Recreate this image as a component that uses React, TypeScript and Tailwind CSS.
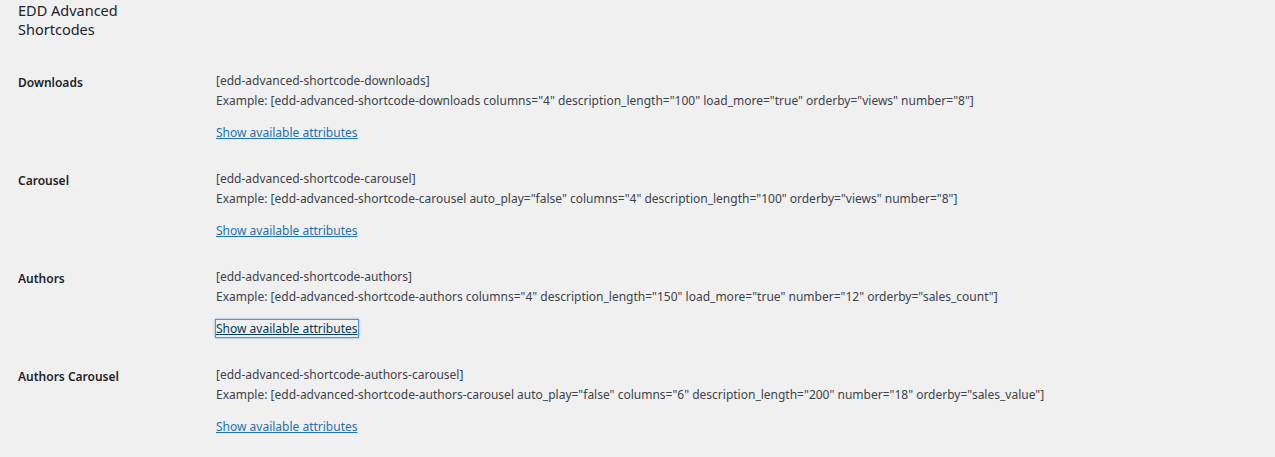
import React from "react";

type Shortcode = {
  label: string;
  tag: string;
  example: string;
  focused?: boolean;
};

const shortcodes: Shortcode[] = [
  {
    label: "Downloads",
    tag: "[edd-advanced-shortcode-downloads]",
    example:
      'Example: [edd-advanced-shortcode-downloads columns="4" description_length="100" load_more="true" orderby="views" number="8"]',
  },
  {
    label: "Carousel",
    tag: "[edd-advanced-shortcode-carousel]",
    example:
      'Example: [edd-advanced-shortcode-carousel auto_play="false" columns="4" description_length="100" orderby="views" number="8"]',
  },
  {
    label: "Authors",
    tag: "[edd-advanced-shortcode-authors]",
    example:
      'Example: [edd-advanced-shortcode-authors columns="4" description_length="150" load_more="true" number="12" orderby="sales_count"]',
    focused: true,
  },
  {
    label: "Authors Carousel",
    tag: "[edd-advanced-shortcode-authors-carousel]",
    example:
      'Example: [edd-advanced-shortcode-authors-carousel auto_play="false" columns="6" description_length="200" number="18" orderby="sales_value"]',
  },
];

function Row({ item }: { item: Shortcode }) {
  return (
    <div className="flex">
      <div className="w-[198px] shrink-0 pt-[2px] text-[12px] font-semibold leading-5 text-[#1d2327]">
        {item.label}
      </div>
      <div className="text-[12px] leading-5 text-[#3c434a]">
        <div>{item.tag}</div>
        <div>{item.example}</div>
        <div className="mt-3">
          {/* the Authors link has keyboard focus in the screenshot */}
          <a
            href="#"
            className={
              item.focused
                ? "text-[#043959] underline shadow-[0_0_0_1px_#4f94d4,0_0_2px_1px_rgba(79,148,212,0.8)]"
                : "text-[#2271b1] underline"
            }
          >
            Show available attributes
          </a>
        </div>
      </div>
    </div>
  );
}

export default function App() {
  return (
    <div className="min-h-[457px] bg-[#f0f0f1] px-[18px] font-['Noto_Sans',sans-serif]">
      <h2 className="w-[130px] pt-[1px] text-[14.5px] font-normal leading-[19px] text-[#1d2327]">
        EDD Advanced Shortcodes
      </h2>
      <div className="mt-[32px] flex flex-col gap-[26px]">
        {shortcodes.map((s) => (
          <Row key={s.label} item={s} />
        ))}
      </div>
    </div>
  );
}
